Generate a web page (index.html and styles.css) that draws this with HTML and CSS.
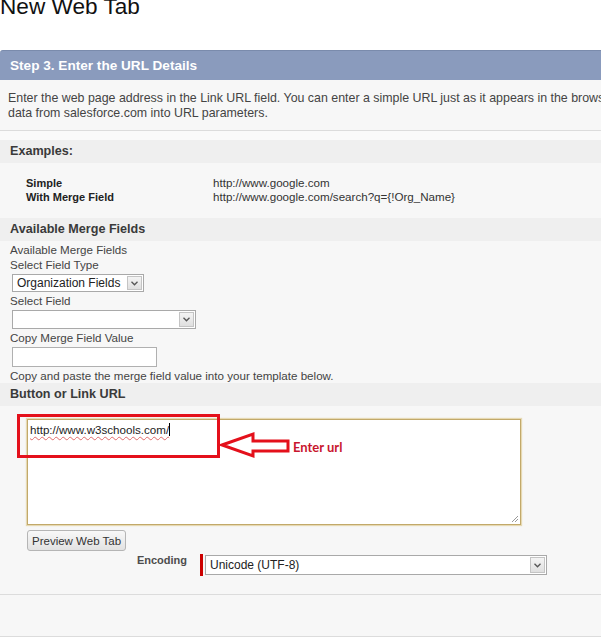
FILE: index.html
```html
<!DOCTYPE html>
<html lang="en">
<head>
    <meta charset="UTF-8">
    <meta name="viewport" content="width=device-width, initial-scale=1.0">
    <title>New Web Tab</title>
    <link rel="stylesheet" href="styles.css">
</head>
<body>
    <h1 class="page-title">New Web Tab</h1>

    <div class="step-bar">Step 3. Enter the URL Details</div>

    <div class="panel">
        <p class="intro">Enter the web page address in the Link URL field. You can enter a simple URL just as it appears in the browser, or you can use merge fields to pass<br>data from salesforce.com into URL parameters.</p>
        <div class="spacer"></div>

        <h3 class="section-head">Examples:</h3>
        <div class="examples">
            <span class="ex-label">Simple</span>
            <span class="ex-value">http://www.google.com</span>
            <span class="ex-label">With Merge Field</span>
            <span class="ex-value">http://www.google.com/search?q={!Org_Name}</span>
        </div>

        <h3 class="section-head">Available Merge Fields</h3>
        <div class="merge-fields">
            <div class="field-label">Available Merge Fields</div>
            <div class="field-label">Select Field Type</div>
            <div class="select select-type">
                <span class="select-text">Organization Fields</span>
                <span class="select-btn"><svg width="7" height="5" viewBox="0 0 7 5"><polyline points="0.5,0.8 3.5,3.8 6.5,0.8" fill="none" stroke="#555" stroke-width="1.3"/></svg></span>
            </div>
            <div class="field-label">Select Field</div>
            <div class="select select-field">
                <span class="select-text"></span>
                <span class="select-btn"><svg width="7" height="5" viewBox="0 0 7 5"><polyline points="0.5,0.8 3.5,3.8 6.5,0.8" fill="none" stroke="#555" stroke-width="1.3"/></svg></span>
            </div>
            <div class="field-label">Copy Merge Field Value</div>
            <div class="text-input"></div>
            <div class="field-label">Copy and paste the merge field value into your template below.</div>
        </div>

        <h3 class="section-head">Button or Link URL</h3>
        <div class="url-area">
            <div class="url-box">
                <span class="url-text">http://www.w3schools.com/</span><span class="caret"></span>
                <svg class="grip" width="9" height="9" viewBox="0 0 9 9"><path d="M8 2 L2 8 M8 5 L5 8" stroke="#999" stroke-width="1"/></svg>
            </div>
            <button type="button" class="preview-btn">Preview Web Tab</button>
            <div class="encoding-row">
                <span class="encoding-label">Encoding</span>
                <span class="required-bar"></span>
                <div class="select select-encoding">
                    <span class="select-text">Unicode (UTF-8)</span>
                    <span class="select-btn"><svg width="7" height="5" viewBox="0 0 7 5"><polyline points="0.5,0.8 3.5,3.8 6.5,0.8" fill="none" stroke="#555" stroke-width="1.3"/></svg></span>
                </div>
            </div>

            <!-- annotation drawn over the screenshot -->
            <svg class="callout" width="280" height="50" viewBox="0 0 280 50">
                <rect x="1.5" y="1.5" width="200" height="41" fill="none" stroke="#e4101b" stroke-width="3"/>
                <polygon points="205,31 236,20 236,27 271,27 271,37 236,37 236,42" fill="none" stroke="#e4101b" stroke-width="3" stroke-linejoin="miter"/>
            </svg>
            <span class="callout-text">Enter url</span>
        </div>

        <div class="footer-strip"></div>
    </div>
</body>
</html>
```

FILE: styles.css
```css
:root {
    --bar: #8a9bbd;
    --panel: #f7f7f7;
    --band: #efefef;
    --line: #dcdcdc;
    --text: #333;
}

* {
    margin: 0;
    padding: 0;
    box-sizing: border-box;
}

body {
    font-family: 'Liberation Sans', Arial, sans-serif;
    color: var(--text);
    background: #fff;
    overflow: hidden;
}

.page-title {
    font-size: 22.6px;
    font-weight: normal;
    line-height: 22px;
    color: #111;
    margin-top: -4px;
    margin-bottom: 32px;
}

.step-bar {
    height: 30px;
    line-height: 29px;
    background-color: var(--bar);
    border-top: 1px solid #7a8bac;
    border-top-left-radius: 3px;
    color: #fff;
    font-weight: bold;
    font-size: 13.6px;
    padding-left: 10px;
    width: 800px;
}

.panel {
    background-color: var(--panel);
    width: 800px;
    border-bottom: 1px solid var(--line);
}

.intro {
    font-size: 12.4px;
    line-height: 15px;
    color: #444;
    padding: 11px 8px 9px;
    white-space: nowrap;
    border-bottom: 1px solid var(--line);
}

.spacer {
    height: 9px;
    background-color: #fafafa;
}

.section-head {
    height: 23px;
    line-height: 23px;
    font-size: 12.6px;
    font-weight: bold;
    color: #3a3a3a;
    background-color: var(--band);
    padding-left: 10px;
}

.section-head + .merge-fields,
.section-head + .url-area {
    margin-top: -1px;
}

.examples {
    display: grid;
    grid-template-columns: 187px auto;
    padding: 13px 0 14px 26px;
    line-height: 14px;
}

.ex-label {
    font-size: 11px;
    font-weight: bold;
    color: #222;
}

.ex-value {
    font-size: 11.6px;
    color: #333;
}

.merge-fields {
    padding: 3px 10px 0;
    display: flex;
    flex-direction: column;
    align-items: flex-start;
    gap: 2px;
}

.field-label {
    font-size: 11.6px;
    line-height: 14px;
    color: #444;
}

.merge-fields .field-label:nth-child(2) {
    margin-top: -1px;
}

.select {
    display: flex;
    align-items: center;
    background: #fff;
    border: 1px solid #a9a9a9;
    margin-left: 2px;
}

.select-text {
    flex: 1;
    font-size: 12px;
    color: #222;
    padding-left: 4px;
    white-space: nowrap;
}

.select-btn {
    display: flex;
    align-items: center;
    justify-content: center;
    width: 15px;
    height: calc(100% - 2px);
    margin-right: 1px;
    background: linear-gradient(#f4f4f4, #dfdfdf);
    border: 1px solid #c4c4c4;
}

.select-type {
    width: 132px;
    height: 18px;
}

.select-field {
    width: 184px;
    height: 19px;
}

.text-input {
    width: 145px;
    height: 20px;
    background: #fff;
    border: 1px solid #b0b0b0;
    margin-left: 2px;
}

.url-area {
    position: relative;
    padding: 14px 0 18px 27px;
    border-bottom: 1px solid var(--line);
}

.url-box {
    position: relative;
    width: 494px;
    height: 106px;
    background: #fff;
    border: 1px solid #c2a96a;
    box-shadow: 0 0 1px 1px rgba(222, 204, 150, 0.7);
    padding: 3px 2px;
    font-size: 11.6px;
    line-height: 14px;
    color: #222;
}

.url-text {
    text-decoration: underline wavy #e06a6a;
    text-decoration-thickness: 1px;
    text-underline-offset: 2px;
}

.caret {
    display: inline-block;
    width: 1px;
    height: 13px;
    background: #000;
    vertical-align: -2px;
}

.grip {
    position: absolute;
    right: 1px;
    bottom: 1px;
}

.preview-btn {
    display: block;
    margin-top: 5px;
    height: 21px;
    padding: 0 4px;
    font-family: inherit;
    font-size: 11.5px;
    color: #333;
    background: linear-gradient(#f8f8f8, #e2e2e2);
    border: 1px solid #b5b5b5;
    border-radius: 3px;
}

.encoding-row {
    display: flex;
    align-items: flex-start;
    margin-top: 3px;
    margin-left: -27px;
}

.encoding-label {
    width: 187px;
    text-align: right;
    font-size: 11px;
    font-weight: bold;
    color: #4d4d4d;
    margin-right: 13px;
}

.required-bar {
    width: 3px;
    height: 22px;
    background: #c00;
    margin-right: 2px;
}

.select-encoding {
    width: 342px;
    height: 20px;
    margin: 1px 0 0;
}

.callout {
    position: absolute;
    left: 17px;
    top: 9px;
}

.callout-text {
    position: absolute;
    left: 293px;
    top: 34px;
    line-height: 16px;
    font-family: Lato, 'Liberation Sans', sans-serif;
    font-weight: bold;
    font-size: 13px;
    color: #c8162e;
}

.footer-strip {
    height: 41px;
}
```
